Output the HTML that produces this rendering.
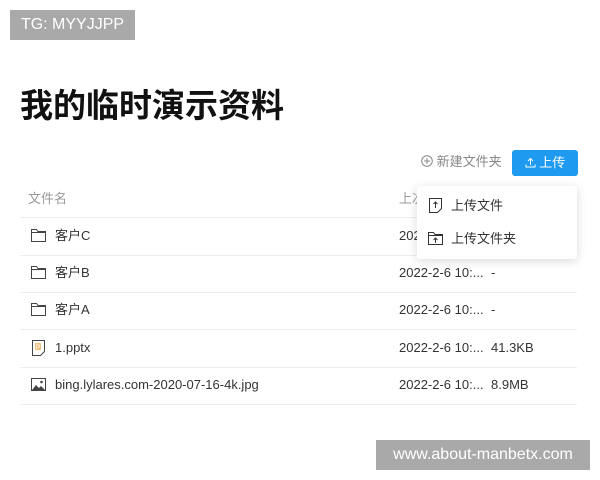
<!DOCTYPE html>
<html><head><meta charset="utf-8"><style>
*{margin:0;padding:0;box-sizing:border-box}
body{width:600px;height:480px;background:#fff;position:relative;overflow:hidden;font-family:"Liberation Sans","Noto Sans CJK SC",sans-serif;color:#222}
.a{position:absolute}
.wm{background:#a9a9a9;color:#fff;font-size:16px;display:flex;align-items:center;justify-content:center}
.line{position:absolute;left:20px;width:557px;height:1px;background:#eee}
.t{position:absolute;font-size:13px;line-height:16px;color:#333}
.g{color:#999}
</style></head><body>
<div class="a wm" style="left:10px;top:10px;width:125px;height:30px">TG: MYYJJPP</div>
<div class="a" style="left:20px;top:84px;font-size:33px;font-weight:bold;color:#111;line-height:44px">我的临时演示资料</div>

<div class="a" style="left:421px;top:153px;font-size:13px;color:#888;line-height:18px">
<svg width="12" height="12" viewBox="0 0 12 12" style="vertical-align:-1px"><circle cx="6" cy="6" r="5.3" fill="none" stroke="#888"/><path d="M6 3v6M3 6h6" stroke="#888"/></svg> 新建文件夹</div>
<div class="a" style="left:512px;top:150px;width:66px;height:26px;background:#1e9bf0;border-radius:3px;color:#fff;font-size:13px;line-height:26px;text-align:center">
<svg width="11" height="11" viewBox="0 0 11 11" style="vertical-align:-1px"><path d="M5.5 8V1.5M3 4l2.5-2.5L8 4M1 7.5V10h9V7.5" stroke="#fff" fill="none"/></svg> 上传</div>

<div class="t g" style="left:28px;top:191px">文件名</div>
<div class="t g" style="left:399px;top:191px">上次</div>
<div class="line" style="top:217px"></div>
<div class="line" style="top:255px"></div>
<div class="line" style="top:292px"></div>
<div class="line" style="top:329px"></div>
<div class="line" style="top:367px"></div>
<div class="line" style="top:404px"></div>

<svg class="a" style="left:31px;top:229px" width="15" height="13" viewBox="0 0 15 13"><path d="M.5 .5h5l1.5 2h7.5v10H.5z M.5 3.5h14" fill="none" stroke="#444"/></svg>
<div class="t" style="left:55px;top:228px">客户C</div>
<svg class="a" style="left:31px;top:266px" width="15" height="13" viewBox="0 0 15 13"><path d="M.5 .5h5l1.5 2h7.5v10H.5z M.5 3.5h14" fill="none" stroke="#444"/></svg>
<div class="t" style="left:55px;top:265px">客户B</div>
<svg class="a" style="left:31px;top:303px" width="15" height="13" viewBox="0 0 15 13"><path d="M.5 .5h5l1.5 2h7.5v10H.5z M.5 3.5h14" fill="none" stroke="#444"/></svg>
<div class="t" style="left:55px;top:302px">客户A</div>
<svg class="a" style="left:32px;top:340px" width="13" height="16" viewBox="0 0 13 16"><path d="M.5 .5h12v11l-4 4H.5z" fill="none" stroke="#444"/><rect x="3" y="3" width="6" height="7" fill="#f0c080"/><text x="4" y="9" font-size="6" fill="#fff" font-family="Liberation Sans">P</text></svg>
<div class="t" style="left:55px;top:340px">1.pptx</div>
<svg class="a" style="left:31px;top:378px" width="15" height="13" viewBox="0 0 15 13"><rect x=".5" y=".5" width="14" height="12" fill="none" stroke="#444"/><path d="M1 12l4-5 3 3 2-2 4 4z" fill="#444"/><circle cx="10.5" cy="4" r="1.3" fill="#444"/></svg>
<div class="t" style="left:55px;top:377px">bing.lylares.com-2020-07-16-4k.jpg</div>

<div class="t" style="left:399px;top:228px">2022</div>
<div class="t" style="left:399px;top:265px">2022-2-6 10:...</div><div class="t" style="left:491px;top:265px">-</div>
<div class="t" style="left:399px;top:302px">2022-2-6 10:...</div><div class="t" style="left:491px;top:302px">-</div>
<div class="t" style="left:399px;top:340px">2022-2-6 10:...</div><div class="t" style="left:491px;top:340px">41.3KB</div>
<div class="t" style="left:399px;top:377px">2022-2-6 10:...</div><div class="t" style="left:491px;top:377px">8.9MB</div>

<div class="a" style="left:417px;top:186px;width:160px;height:73px;background:#fff;border-radius:3px;box-shadow:0 2px 10px rgba(0,0,0,.15)">
<svg class="a" style="left:12px;top:12px" width="13" height="15" viewBox="0 0 13 15"><path d="M.5 .5h12v10l-4 4H.5z" fill="none" stroke="#333"/><path d="M6.5 10V4M4.5 6l2-2 2 2" fill="none" stroke="#333"/></svg>
<div class="t" style="left:34px;top:12px">上传文件</div>
<svg class="a" style="left:11px;top:46px" width="15" height="13" viewBox="0 0 15 13"><path d="M.5 .5h5l1.5 2h7.5v10H.5z M.5 3.5h14" fill="none" stroke="#333"/><path d="M7.5 11V6M5.5 8l2-2 2 2" fill="none" stroke="#333"/></svg>
<div class="t" style="left:34px;top:45px">上传文件夹</div>
</div>

<div class="a wm" style="left:376px;top:440px;width:214px;height:30px">www.about-manbetx.com</div>
</body></html>
